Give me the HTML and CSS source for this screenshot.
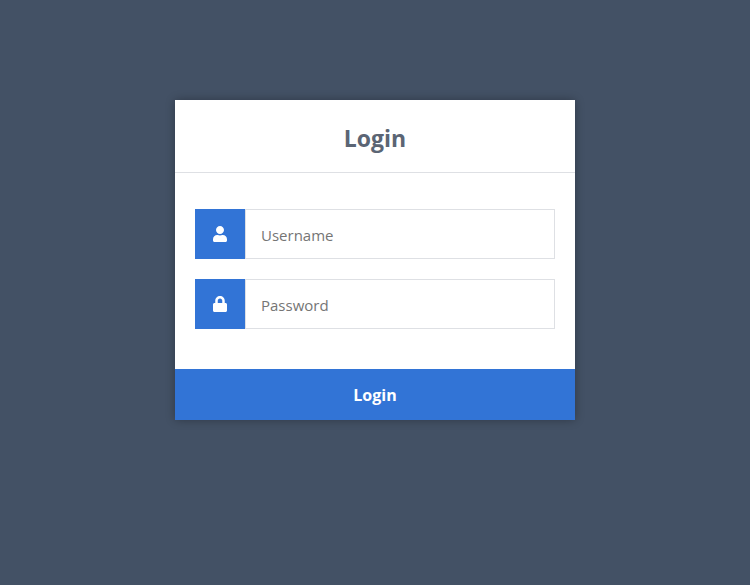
FILE: index.html
```html
<!DOCTYPE html>
<html lang="en">
<head>
<meta charset="utf-8">
<title>Login</title>
<link rel="stylesheet" href="styles.css">
</head>
<body>
<main class="login">
  <h1>Login</h1>
  <form class="form">
    <label class="icon" for="username" aria-label="Username">
      <svg viewBox="0 0 448 512" aria-hidden="true"><path d="M224 256c70.700 0 128-57.300 128-128S294.700 0 224 0 96 57.300 96 128s57.300 128 128 128zm89.600 32h-16.700c-22.200 10.200-46.900 16-72.900 16s-50.600-5.800-72.900-16h-16.700C60.200 288 0 348.200 0 422.400V464c0 26.500 21.500 48 48 48h352c26.500 0 48-21.500 48-48v-41.600c0-74.200-60.200-134.400-134.400-134.400z"/></svg>
    </label>
    <input class="field" type="text" id="username" name="username" placeholder="Username">
    <label class="icon" for="password" aria-label="Password">
      <svg viewBox="0 0 448 512" aria-hidden="true"><path d="M400 224h-24v-72C376 68.200 307.800 0 224 0S72 68.200 72 152v72H48c-26.500 0-48 21.500-48 48v192c0 26.500 21.500 48 48 48h352c26.500 0 48-21.500 48-48V272c0-26.500-21.500-48-48-48zm-104 0H152v-72c0-39.700 32.300-72 72-72s72 32.300 72 72v72z"/></svg>
    </label>
    <input class="field" type="password" id="password" name="password" placeholder="Password">
    <button class="submit" type="submit">Login</button>
  </form>
</main>
</body>
</html>
```

FILE: styles.css
```css
* {
  box-sizing: border-box;
  font-family: "Segoe UI", "Open Sans", "Noto Sans", sans-serif;
  font-size: 16px;
}

body {
  margin: 0;
  background: #435165;
}

.login {
  width: 400px;
  max-width: 100%;
  margin: 100px auto;
  background: #ffffff;
  box-shadow: 0 0 9px 0 rgba(0, 0, 0, 0.3);
}

.login h1 {
  margin: 0;
  padding: 22px 0 18px;
  border-bottom: 1px solid #dee0e4;
  color: #5b6574;
  font-size: 23px;
  line-height: 32px;
  text-align: center;
}

.form {
  display: flex;
  flex-wrap: wrap;
  padding-top: 36px;
}

.icon {
  display: flex;
  align-items: center;
  justify-content: center;
  width: 50px;
  height: 50px;
  margin-left: 20px;
  background: #3274d6;
  color: #ffffff;
}

.icon svg {
  width: 14px;
  height: 16px;
  fill: currentColor;
}

.field {
  flex: 1 0 250px;
  height: 50px;
  margin: 0 20px 20px 0;
  padding: 2px 15px 0;
  border: 1px solid #dee0e4;
  font-size: 15px;
}

.field::placeholder {
  color: #757575;
}

.submit {
  width: 100%;
  margin-top: 20px;
  padding: 16px 15px 14px;
  border: 0;
  background: #3274d6;
  color: #ffffff;
  font-weight: bold;
  line-height: 21px;
  cursor: pointer;
}
```
